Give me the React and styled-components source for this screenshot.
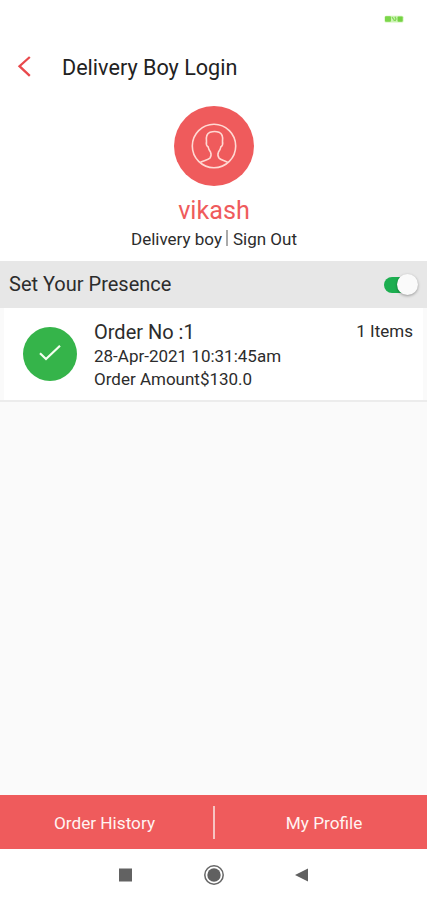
import React from "react";
import styled, { createGlobalStyle } from "styled-components";

const coral = "#ef5b5c";

const GlobalStyle = createGlobalStyle`
  * { box-sizing: border-box; }
  body {
    margin: 0;
    background: #fafafa;
    font-family: Roboto, "Liberation Sans", sans-serif;
    color: #2c2c2c;
  }
  button { font-family: inherit; border: 0; padding: 0; background: none; }
`;

const Screen = styled.div`
  display: flex;
  flex-direction: column;
  width: 427px;
  height: 900px;
  overflow: hidden;
  background: #fafafa;
`;

const StatusBar = styled.div`
  height: 38px;
  padding: 15px 23px 0 0;
  display: flex;
  justify-content: flex-end;
  background: #fff;
`;

const Header = styled.header`
  height: 58px;
  display: flex;
  align-items: center;
  padding-left: 16px;
  background: #fff;
`;

const BackButton = styled.button`
  display: flex;
  width: 46px;
  height: 24px;
`;

const Title = styled.h1`
  margin: 2px 0 0;
  font-weight: 400;
  font-size: 21.6px;
  line-height: 28px;
  color: #222;
  white-space: nowrap;
`;

const Profile = styled.section`
  height: 165px;
  padding: 10px 0 0 1px;
  display: flex;
  flex-direction: column;
  align-items: center;
  background: #fff;
`;

const Avatar = styled.div`
  width: 80px;
  height: 80px;
  border-radius: 50%;
  background: ${coral};
  display: flex;
  align-items: center;
  justify-content: center;
`;

const UserName = styled.div`
  margin-top: 9px;
  font-size: 25.2px;
  line-height: 32px;
  color: ${coral};
`;

const ProfileLinks = styled.div`
  display: flex;
  align-items: center;
  margin-top: 1px;
  height: 22px;
  font-size: 17px;
  line-height: 22px;
  white-space: nowrap;
`;

const LinkDivider = styled.span`
  width: 2px;
  height: 16px;
  margin: 0 5px 2px 4px;
  background: #aaa;
`;

const PresenceBar = styled.section`
  height: 47px;
  padding: 0 9px;
  display: flex;
  align-items: center;
  justify-content: space-between;
  background: #e7e7e7;
`;

const PresenceLabel = styled.span`
  margin-bottom: 1px;
  font-size: 20px;
  line-height: 26px;
`;

const SwitchTrack = styled.button`
  width: 33px;
  height: 16px;
  margin-right: 1px;
  border-radius: 8px;
  background: #1cae50;
  display: flex;
  align-items: center;
  justify-content: flex-end;
`;

const SwitchThumb = styled.span`
  flex: none;
  width: 21px;
  height: 21px;
  margin-right: -1px;
  border-radius: 50%;
  background: #fafafa;
  box-shadow: 0 1px 3px rgba(0, 0, 0, 0.35);
`;

const OrderCard = styled.article`
  height: 92px;
  margin: 0 4px;
  padding: 11px 10px 0 19px;
  display: flex;
  align-items: flex-start;
  background: #fff;
`;

const OrderEdge = styled.div`
  border-bottom: 2px solid #ececec;
`;

const StatusCircle = styled.div`
  width: 54px;
  height: 54px;
  margin-top: 8px;
  border-radius: 50%;
  background: #35b44a;
  display: flex;
  align-items: center;
  justify-content: center;
`;

const OrderInfo = styled.div`
  flex: 1;
  padding-left: 17px;
  white-space: nowrap;
`;

const OrderNumber = styled.div`
  font-size: 20px;
  line-height: 26px;
`;

const OrderLine = styled.div`
  font-size: 17px;
  line-height: 23px;
`;

const ItemCount = styled.div`
  font-size: 17px;
  line-height: 24px;
`;

const Content = styled.main`
  flex: 1;
`;

const Footer = styled.nav`
  height: 54px;
  display: grid;
  grid-template-columns: 213px 2px 1fr;
  align-items: center;
  background: ${coral};
`;

const FooterTab = styled.button`
  font-size: 17.2px;
  line-height: 24px;
  margin-top: 1px;
  color: #fff4f2;
  padding: ${(p) => p.$inset};
`;

const FooterDivider = styled.span`
  height: 33px;
  background: #f7c4c2;
`;

const SystemNav = styled.div`
  height: 51px;
  display: flex;
  align-items: center;
  justify-content: center;
  gap: 70px;
  background: #fff;
`;

export default function App() {
  return (
    <>
      <GlobalStyle />
      <Screen>
        <StatusBar>
          <svg width="20" height="8" viewBox="0 0 20 8">
            <rect x="0.5" y="0.8" width="19" height="6.6" rx="1.5" fill="#cdf3b5" />
            <rect x="1" y="1.2" width="6" height="5.6" rx="1" fill="#7bd64a" />
            <path d="M8 2.200 9.500 4 10.500 6M11 1.800l1 2.200-1 2" stroke="#83d957" strokeWidth="1.300" fill="none" />
            <rect x="13.500" y="1.400" width="5.200" height="5.400" rx="1" fill="#75d244" />
          </svg>
        </StatusBar>
        <Header>
          <BackButton aria-label="Back">
            <svg width="16" height="24" viewBox="0 0 16 24" fill="none">
              <path d="M13.800 2 3.500 11.200l10.300 9.600" stroke="#e9494c" strokeWidth="2.300" />
            </svg>
          </BackButton>
          <Title>Delivery Boy Login</Title>
        </Header>
        <Profile>
          <Avatar>
            <svg width="46" height="46" viewBox="0 0 46 46" fill="none" stroke="#ffd9d3" strokeWidth="1.600">
              <circle cx="23" cy="23" r="21.700" />
              <path d="M9.500 39.300c3-1.800 8-2.300 9.500-4.300 1.300-2 1.400-4 .5-6-1.200-1.500-2-3-2.300-5-1.700-1.200-2.200-3.200-1.700-5.500C14.800 13.500 16 10.500 19 9.300c2.800-1 6.500-1 9 0 3 1.200 4.200 4.200 3.500 9.200.5 2.300 0 4.300-1.700 5.500-.3 2-1.100 3.500-2.300 5-.9 2-.8 4 .5 6 1.500 2 5.500 2.500 8.500 4.300" />
            </svg>
          </Avatar>
          <UserName>vikash</UserName>
          <ProfileLinks>
            <span>Delivery boy</span>
            <LinkDivider />
            <span>Sign Out</span>
          </ProfileLinks>
        </Profile>
        <PresenceBar>
          <PresenceLabel>Set Your Presence</PresenceLabel>
          <SwitchTrack role="switch" aria-checked="true" aria-label="Presence">
            <SwitchThumb />
          </SwitchTrack>
        </PresenceBar>
        <Content>
          <OrderEdge>
            <OrderCard>
              <StatusCircle>
                <svg width="24" height="20" viewBox="0 0 24 20" fill="none">
                  <path d="M2 9.300 8 15 22 1.700" stroke="#f4fff0" strokeWidth="2.200" />
                </svg>
              </StatusCircle>
              <OrderInfo>
                <OrderNumber>Order No :1</OrderNumber>
                <OrderLine>28-Apr-2021 10:31:45am</OrderLine>
                <OrderLine>Order Amount$130.0</OrderLine>
              </OrderInfo>
              <ItemCount>1 Items</ItemCount>
            </OrderCard>
          </OrderEdge>
        </Content>
        <Footer>
          <FooterTab $inset="0 4px 0 0">Order History</FooterTab>
          <FooterDivider />
          <FooterTab $inset="0 0 0 6px">My Profile</FooterTab>
        </Footer>
        <SystemNav>
          <svg width="14" height="14" viewBox="0 0 14 14">
            <rect x="0" y="0.500" width="13" height="13" fill="#626262" />
          </svg>
          <svg width="22" height="22" viewBox="0 0 22 22">
            <circle cx="11" cy="11" r="9.200" fill="none" stroke="#666" strokeWidth="1.500" />
            <circle cx="11" cy="11" r="6.700" fill="#606060" />
          </svg>
          <svg width="14" height="14" viewBox="0 0 14 14">
            <path d="M0 7 13 0.500v13z" fill="#606060" />
          </svg>
        </SystemNav>
      </Screen>
    </>
  );
}
